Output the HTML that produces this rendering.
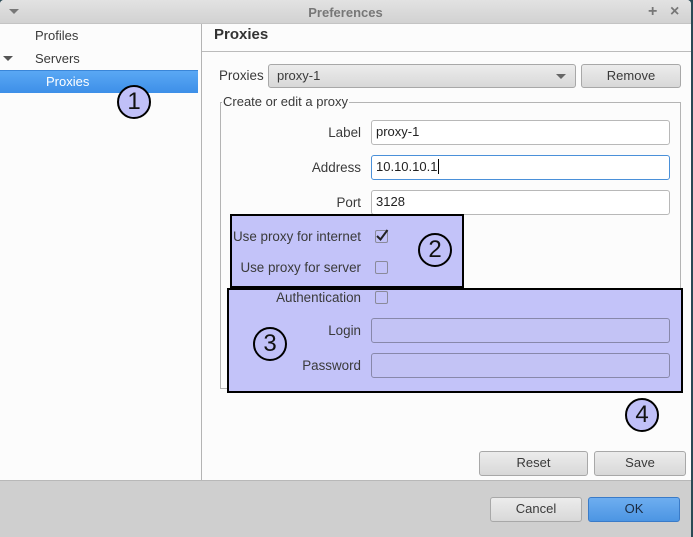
<!DOCTYPE html>
<html><head><style>
*{box-sizing:border-box;margin:0;padding:0}
body{width:693px;height:537px;position:relative;overflow:hidden;background:#2b4a55;font-family:"Liberation Sans","DejaVu Sans",sans-serif;font-size:13px;color:#3a3a3a}
.a{position:absolute}
.win{left:0;top:0;width:691px;height:537px;background:#fcfcfc;border-radius:4px 4px 0 0;overflow:hidden}
.title{left:0;top:0;width:691px;height:24px;background:linear-gradient(#e2e2e2,#d2d2d2);border-bottom:1px solid #c4c4c4}
.lbl{text-align:right;white-space:nowrap;font-size:13.4px}
.in{background:#fff;border:1px solid #b8b8b8;border-radius:3px;padding-left:4px;line-height:22px;color:#222}
.btn{background:linear-gradient(#ececec,#d8d8d8);border:1px solid #a8a8a8;border-radius:3px;text-align:center;line-height:22px;color:#3a3a3a}
.cb{width:13px;height:13px;border:1px solid #8a8a9a;border-radius:2px}
.hl{background:#c3c3f9;border:2px solid #000}
.c{width:34px;height:34px;border-radius:50%;background:#c0c0f8;border:2px solid #000;text-align:center;line-height:30px;font-size:24px;color:#111}
.fld{background:#c3c3f5;border:1px solid #8888aa;border-radius:3px}
</style></head><body>
<div class="a win">
 <div class="a title">
  <div class="a" style="left:9px;top:9px;width:0;height:0;border-left:5px solid transparent;border-right:5px solid transparent;border-top:5px solid #777"></div>
  <div class="a" style="left:0;width:691px;top:5px;text-align:center;font-weight:bold;color:#777;font-size:13px">Preferences</div>
  <div class="a" style="left:648px;top:3px;color:#777;font-size:16px;font-weight:bold">+</div>
  <div class="a" style="left:670px;top:3px;color:#777;font-size:16px;font-weight:bold">×</div>
 </div>
 <div class="a" style="left:35px;top:28px">Profiles</div>
 <div class="a" style="left:3px;top:56px;width:0;height:0;border-left:5px solid transparent;border-right:5px solid transparent;border-top:5px solid #555"></div>
 <div class="a" style="left:35px;top:51px">Servers</div>
 <div class="a" style="left:0;top:70px;width:198px;height:23px;background:linear-gradient(#5aa8f4,#3d8fe8);border-top:1px solid #3a86d8;color:#fff;padding-left:46px;line-height:22px">Proxies</div>
 <div class="a" style="left:201px;top:24px;width:1px;height:457px;background:#b4b4b4"></div>
 <div class="a" style="left:214px;top:26px;font-weight:bold;font-size:15px;color:#333">Proxies</div>
 <div class="a" style="left:202px;top:51px;width:489px;height:1px;background:#bbb"></div>
 <div class="a lbl" style="left:219px;top:68px">Proxies</div>
 <div class="a btn" style="left:268px;top:64px;width:308px;height:24px;text-align:left;padding-left:8px">proxy-1
  <div class="a" style="right:9px;top:9px;width:0;height:0;border-left:5px solid transparent;border-right:5px solid transparent;border-top:5px solid #666"></div></div>
 <div class="a btn" style="left:581px;top:64px;width:100px;height:24px">Remove</div>
 <div class="a" style="left:220px;top:102px;width:461px;height:287px;border:1px solid #b4b4b4"></div>
 <div class="a" style="left:222px;top:94px;background:#fcfcfc;padding:0 1px">Create or edit a proxy</div>
 <div class="a lbl" style="left:300px;top:125px;width:61px">Label</div>
 <div class="a in" style="left:371px;top:120px;width:299px;height:25px">proxy-1</div>
 <div class="a lbl" style="left:280px;top:160px;width:81px">Address</div>
 <div class="a in" style="left:371px;top:155px;width:299px;height:25px;border-color:#4a90d9">10.10.10.1<span style="border-left:1px solid #000;margin-left:1px"></span></div>
 <div class="a lbl" style="left:300px;top:195px;width:61px">Port</div>
 <div class="a in" style="left:371px;top:190px;width:299px;height:25px">3128</div>
 <div class="a hl" style="left:230px;top:214px;width:234px;height:74px"></div>
 <div class="a lbl" style="left:200px;top:229px;width:161px">Use proxy for internet</div>
 <div class="a cb" style="left:375px;top:230px"></div>
 <svg class="a" style="left:374px;top:227px" width="16" height="16" viewBox="0 0 16 16"><path d="M3 9 L6.5 12.5 L13.5 3" fill="none" stroke="#222" stroke-width="2"/></svg>
 <div class="a lbl" style="left:200px;top:260px;width:161px">Use proxy for server</div>
 <div class="a cb" style="left:375px;top:261px"></div>
 <div class="a c" style="left:418px;top:233px">2</div>
 <div class="a hl" style="left:227px;top:288px;width:456px;height:105px"></div>
 <div class="a lbl" style="left:200px;top:290px;width:161px">Authentication</div>
 <div class="a cb" style="left:375px;top:291px"></div>
 <div class="a lbl" style="left:300px;top:323px;width:61px">Login</div>
 <div class="a fld" style="left:371px;top:318px;width:299px;height:25px"></div>
 <div class="a lbl" style="left:280px;top:358px;width:81px">Password</div>
 <div class="a fld" style="left:371px;top:353px;width:299px;height:25px"></div>
 <div class="a c" style="left:253px;top:327px">3</div>
 <div class="a c" style="left:117px;top:85px">1</div>
 <div class="a c" style="left:625px;top:398px">4</div>
 <div class="a btn" style="left:479px;top:451px;width:109px;height:25px">Reset</div>
 <div class="a btn" style="left:594px;top:451px;width:92px;height:25px">Save</div>
 <div class="a" style="left:0;top:480px;width:691px;height:57px;background:#cfcfcf;border-top:1px solid #b8b8b8"></div>
 <div class="a btn" style="left:490px;top:497px;width:92px;height:25px">Cancel</div>
 <div class="a btn" style="left:588px;top:497px;width:92px;height:25px;background:linear-gradient(#6eaef0,#4c95e3);border-color:#3a7bc8;color:#1a2a40">OK</div>
</div>
</body></html>
